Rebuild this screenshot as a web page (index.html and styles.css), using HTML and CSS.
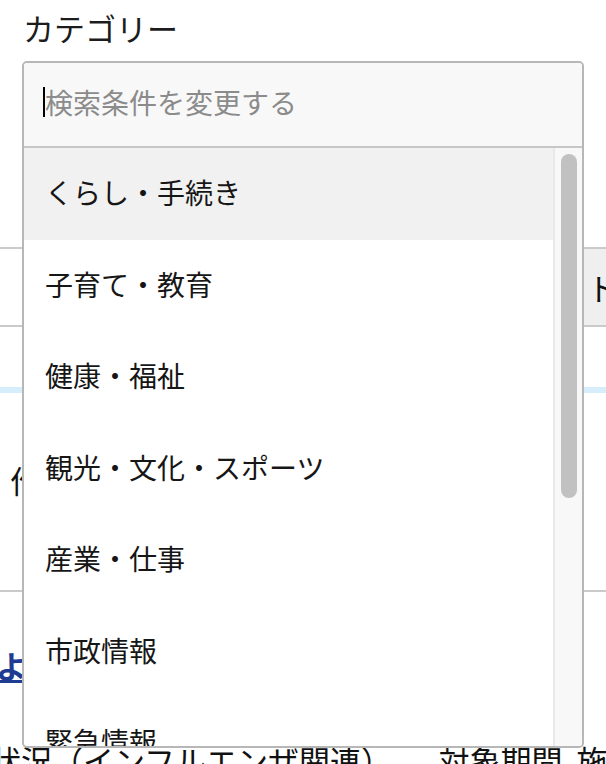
FILE: index.html
```html
<!DOCTYPE html>
<html lang="ja">
<head>
    <meta charset="UTF-8">
    <meta name="viewport" content="width=device-width, initial-scale=1.0">
    <title>カテゴリー検索</title>
    <link rel="stylesheet" href="styles.css">
</head>
<body>
    <div class="page">
        <section class="field">
            <label class="field-label" for="categorySearch">カテゴリー</label>

            <!-- open category picker -->
            <div class="combo">
                <div class="combo-search">
                    <span class="caret"></span>
                    <input type="text" id="categorySearch" placeholder="検索条件を変更する">
                </div>
                <div class="combo-body">
                    <ul class="combo-options">
                        <li class="is-active">くらし・手続き</li>
                        <li>子育て・教育</li>
                        <li>健康・福祉</li>
                        <li>観光・文化・スポーツ</li>
                        <li>産業・仕事</li>
                        <li>市政情報</li>
                        <li>緊急情報</li>
                    </ul>
                    <div class="combo-scroll">
                        <div class="combo-thumb"></div>
                    </div>
                </div>
            </div>
        </section>

        <nav class="tabs">
            <a class="tab" href="#">新着情報</a>
            <a class="tab tab-alt" href="#">トピックス</a>
        </nav>

        <div class="section-rule"></div>

        <p class="notice">作成日の新しい順に表示しています</p>

        <p class="entry-link"><a href="#">よくあるお問い合わせ</a></p>

        <p class="entry-text">状況（インフルエンザ関連）　　対象期間&nbsp;&nbsp;施設別</p>
    </div>
</body>
</html>
```

FILE: styles.css
```css
* {
    box-sizing: border-box;
}
body {
    margin: 0;
    font-family: "Noto Sans CJK JP", "Noto Sans", sans-serif;
    color: #111;
    background: #fff;
    overflow: hidden;
}
.page {
    width: 606px;
    height: 764px;
    overflow: hidden;
}

/* field + picker */
.field {
    position: relative;
    height: 247px;
    padding: 5px 22px 0 23px;
}
.field-label {
    display: block;
    font-size: 31px;
    line-height: 45px;
    color: #1c1c1c;
}
.combo {
    position: absolute;
    top: 61px;
    left: 22px;
    width: 562px;
    height: 687px;
    border: 2px solid #b7b7b7;
    border-radius: 5px;
    background: #fff;
    overflow: hidden;
    z-index: 10;
}
.combo-search {
    display: flex;
    align-items: center;
    height: 85px;
    padding: 0 0 6px 19px;
    background: #f8f8f8;
    border-bottom: 2px solid #c6c6c6;
}
.caret {
    width: 2px;
    height: 30px;
    background: #000;
    flex: none;
}
.combo-search input {
    flex: 1;
    border: none;
    outline: none;
    background: transparent;
    padding: 0;
    font-family: inherit;
    font-size: 28px;
    line-height: 40px;
    color: #222;
}
.combo-search input::placeholder {
    color: #8b8b8b;
}
.combo-body {
    display: flex;
    height: 598px;
}
.combo-options {
    flex: 1;
    margin: 0;
    padding: 0;
    list-style: none;
}
.combo-options li {
    display: flex;
    align-items: center;
    height: 91.5px;
    padding: 0 0 3px 21px;
    font-size: 28px;
    color: #161616;
}
.combo-options li.is-active {
    background: #f1f1f1;
}
.combo-scroll {
    width: 29px;
    padding: 6px 0 0 6px;
    background: #f8f8f8;
    border-left: 2px solid #e8e8e8;
}
.combo-thumb {
    width: 16px;
    height: 344px;
    border-radius: 8px;
    background: #c1c1c1;
}

/* page content behind the picker */
.tabs {
    display: flex;
    height: 80px;
    border-top: 2px solid #cacaca;
    border-bottom: 2px solid #cacaca;
}
.tab {
    display: flex;
    align-items: center;
    justify-content: center;
    width: 584px;
    flex: none;
    font-size: 31px;
    color: #111;
    text-decoration: none;
}
.tab-alt {
    width: 200px;
    justify-content: flex-start;
    padding-left: 3px;
    background: #efefef;
}
.section-rule {
    height: 6px;
    margin-top: 60px;
    background: #d6edfb;
}
.notice {
    margin: 0;
    padding: 64px 0 0 10px;
    height: 199px;
    font-size: 31px;
    line-height: 45px;
    white-space: nowrap;
    border-bottom: 2px solid #cacaca;
}
.entry-link {
    margin: 0;
    padding-top: 50px;
    margin-left: -4px;
    font-size: 31px;
    line-height: 45px;
    white-space: nowrap;
}
.entry-link a {
    color: #1d3c92;
    font-weight: bold;
}
.entry-text {
    margin: 50px 0 0 -10px;
    font-size: 31px;
    line-height: 45px;
    white-space: nowrap;
}
```
